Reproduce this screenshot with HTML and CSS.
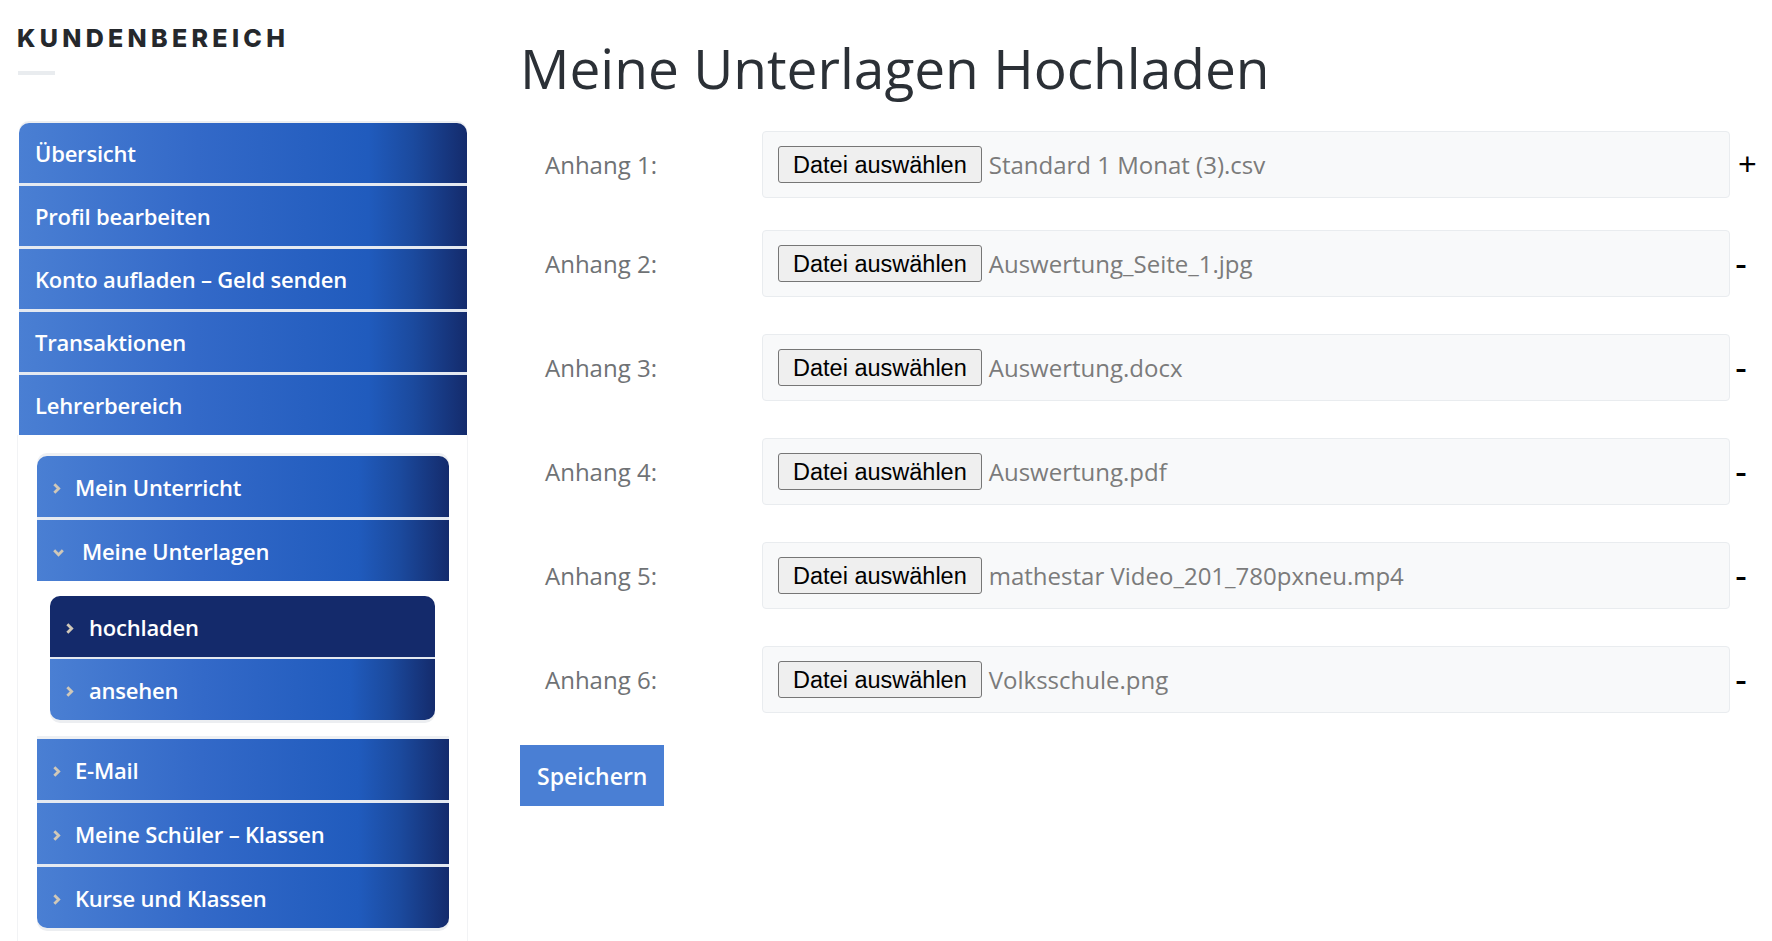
FILE: index.html
```html
<!DOCTYPE html>
<html lang="de">
<head>
    <meta charset="UTF-8">
    <meta name="viewport" content="width=device-width, initial-scale=1.0">
    <title>Meine Unterlagen Hochladen</title>
    <link rel="stylesheet" href="styles.css">
</head>
<body>
<div class="page">

    <aside class="sidebar">
        <h2 class="side-title">KUNDENBEREICH</h2>
        <div class="side-rule"></div>

        <ul class="menu menu-top">
            <li><a href="#">Übersicht</a></li>
            <li><a href="#">Profil bearbeiten</a></li>
            <li><a href="#">Konto aufladen – Geld senden</a></li>
            <li><a href="#">Transaktionen</a></li>
            <li><a href="#">Lehrerbereich</a></li>
        </ul>

        <div class="submenu-wrap">
            <ul class="menu menu-sub menu-sub-start">
                <li><a href="#"><svg class="chev" viewBox="0 0 8 12"><polyline points="2,2 6,6 2,10"/></svg>Mein Unterricht</a></li>
                <li><a href="#"><svg class="chev chev-down" viewBox="0 0 12 8"><polyline points="2,2 6,6 10,2"/></svg>Meine Unterlagen</a></li>
            </ul>

            <ul class="menu menu-subsub">
                <li><a href="#" class="active"><svg class="chev" viewBox="0 0 8 12"><polyline points="2,2 6,6 2,10"/></svg>hochladen</a></li>
                <li><a href="#"><svg class="chev" viewBox="0 0 8 12"><polyline points="2,2 6,6 2,10"/></svg>ansehen</a></li>
            </ul>

            <ul class="menu menu-sub menu-sub-end">
                <li><a href="#"><svg class="chev" viewBox="0 0 8 12"><polyline points="2,2 6,6 2,10"/></svg>E-Mail</a></li>
                <li><a href="#"><svg class="chev" viewBox="0 0 8 12"><polyline points="2,2 6,6 2,10"/></svg>Meine Schüler – Klassen</a></li>
                <li><a href="#"><svg class="chev" viewBox="0 0 8 12"><polyline points="2,2 6,6 2,10"/></svg>Kurse und Klassen</a></li>
            </ul>
        </div>
    </aside>

    <main class="content">
        <h1 class="page-title">Meine Unterlagen Hochladen</h1>

        <form class="upload-form" onsubmit="return false;">
            <div class="upload-row upload-row-first">
                <label class="row-label">Anhang 1:</label>
                <div class="file-field"><button type="button" class="file-btn">Datei auswählen</button><span class="file-name">Standard 1 Monat (3).csv</span></div>
                <span class="row-ctrl">+</span>
            </div>
            <div class="upload-row">
                <label class="row-label">Anhang 2:</label>
                <div class="file-field"><button type="button" class="file-btn">Datei auswählen</button><span class="file-name">Auswertung_Seite_1.jpg</span></div>
                <span class="row-ctrl minus">-</span>
            </div>
            <div class="upload-row">
                <label class="row-label">Anhang 3:</label>
                <div class="file-field"><button type="button" class="file-btn">Datei auswählen</button><span class="file-name">Auswertung.docx</span></div>
                <span class="row-ctrl minus">-</span>
            </div>
            <div class="upload-row">
                <label class="row-label">Anhang 4:</label>
                <div class="file-field"><button type="button" class="file-btn">Datei auswählen</button><span class="file-name">Auswertung.pdf</span></div>
                <span class="row-ctrl minus">-</span>
            </div>
            <div class="upload-row">
                <label class="row-label">Anhang 5:</label>
                <div class="file-field"><button type="button" class="file-btn">Datei auswählen</button><span class="file-name">mathestar Video_201_780pxneu.mp4</span></div>
                <span class="row-ctrl minus">-</span>
            </div>
            <div class="upload-row">
                <label class="row-label">Anhang 6:</label>
                <div class="file-field"><button type="button" class="file-btn">Datei auswählen</button><span class="file-name">Volksschule.png</span></div>
                <span class="row-ctrl minus">-</span>
            </div>

            <button type="submit" class="save-btn">Speichern</button>
        </form>
    </main>

</div>
</body>
</html>
```

FILE: styles.css
```css
body { margin: 0; background: #fff; font-family: "Open Sans", sans-serif; }
.page { display: flex; gap: 52px; }

/* sidebar */
.sidebar { width: 468px; flex: none; padding-top: 26px; box-sizing: border-box; }
.side-title { margin: 0 0 0 17px; font: 800 25px/25px Inter, sans-serif; letter-spacing: 4.3px; color: #25282c; }
.side-rule { width: 37px; height: 4px; background: #e9ecef; margin: 20px 0 48px 18px; }

.menu { list-style: none; margin: 0; padding: 0; overflow: hidden; }
.menu a { display: flex; align-items: center; height: 60px; padding-left: 16px; color: #fff; text-decoration: none; font-size: 22px; font-weight: 600; letter-spacing: -0.2px; border-bottom: 3px solid #e4e9f1; background: linear-gradient(to right, #4a7fd3 0%, #3369c8 40%, #205bbd 78%, #1b4a9e 88%, #142b6c 100%); }
.menu li:last-child a { border-bottom: 0; }
.menu a.active { background: #142a6b; }

.menu-top { margin-left: 19px; width: 448px; border-radius: 10px 10px 0 0; box-shadow: 0 -2px 0 #eceef1; }

.submenu-wrap { margin-left: 17px; width: 451px; box-sizing: border-box; padding: 21px 18px 40px 19px; border-left: 1px solid #f2f3f5; border-right: 1px solid #f2f3f5; }
.menu-sub a { height: 61px; padding-left: 15px; }
.menu-sub-start { border-radius: 10px 10px 0 0; box-shadow: 0 -3px 0 #eef0f3; }
.menu-sub-end { margin-top: 19px; border-radius: 0 0 10px 10px; box-shadow: 0 -3px 0 #eef0f3, 0 3px 0 #eceef1; }
.menu-subsub { margin: 15px 14px 0 13px; border-radius: 10px; box-shadow: 0 3px 0 #eceef1; }
.menu-subsub a { height: 61px; padding-left: 15px; border-bottom-width: 2px; }

.chev { width: 9px; height: 13px; margin: 3px 14px 0 0; flex: none; }
.chev polyline { fill: none; stroke: #d0c8b8; stroke-width: 2.6; }
.chev-down { width: 13px; height: 9px; margin-right: 17px; }
.menu-subsub .chev { margin-right: 15px; }

/* content */
.content { flex: 1; min-width: 0; }
.page-title { margin: 0; padding-top: 34px; font-size: 55px; line-height: 68px; font-weight: 400; color: #2b3036; }

.upload-form { margin-top: 29px; }
.upload-row { display: flex; align-items: center; margin-top: 37px; }
.upload-row:first-child { margin-top: 0; }
.upload-row-first + .upload-row { margin-top: 32px; }
.row-label { width: 242px; flex: none; box-sizing: border-box; padding-left: 25px; font-size: 24px; color: #6f7275; }
.file-field { flex: 1; display: flex; align-items: center; height: 67px; box-sizing: border-box; padding: 0 15px; background: #f8f9fa; border: 1px solid #e9ecef; border-radius: 4px; }
.file-btn { height: 37px; padding: 2px 14px 0; font: 23.5px "Liberation Sans", Arial, sans-serif; color: #000; background: #efefef; border: 1px solid #767676; border-radius: 3px; }
.file-name { margin-left: 7px; font-size: 24px; color: #7b7b7b; white-space: nowrap; }
.row-ctrl { width: 42px; flex: none; box-sizing: border-box; padding-left: 8px; font: 32px "Liberation Sans", Arial, sans-serif; color: #000; }
.row-ctrl.minus { padding-left: 5px; font-size: 36px; }

.save-btn { margin-top: 32px; height: 61px; padding: 0 17px; background: #4a7fd4; color: #fff; border: 0; font: 600 23px "Open Sans", sans-serif; cursor: pointer; }
```
